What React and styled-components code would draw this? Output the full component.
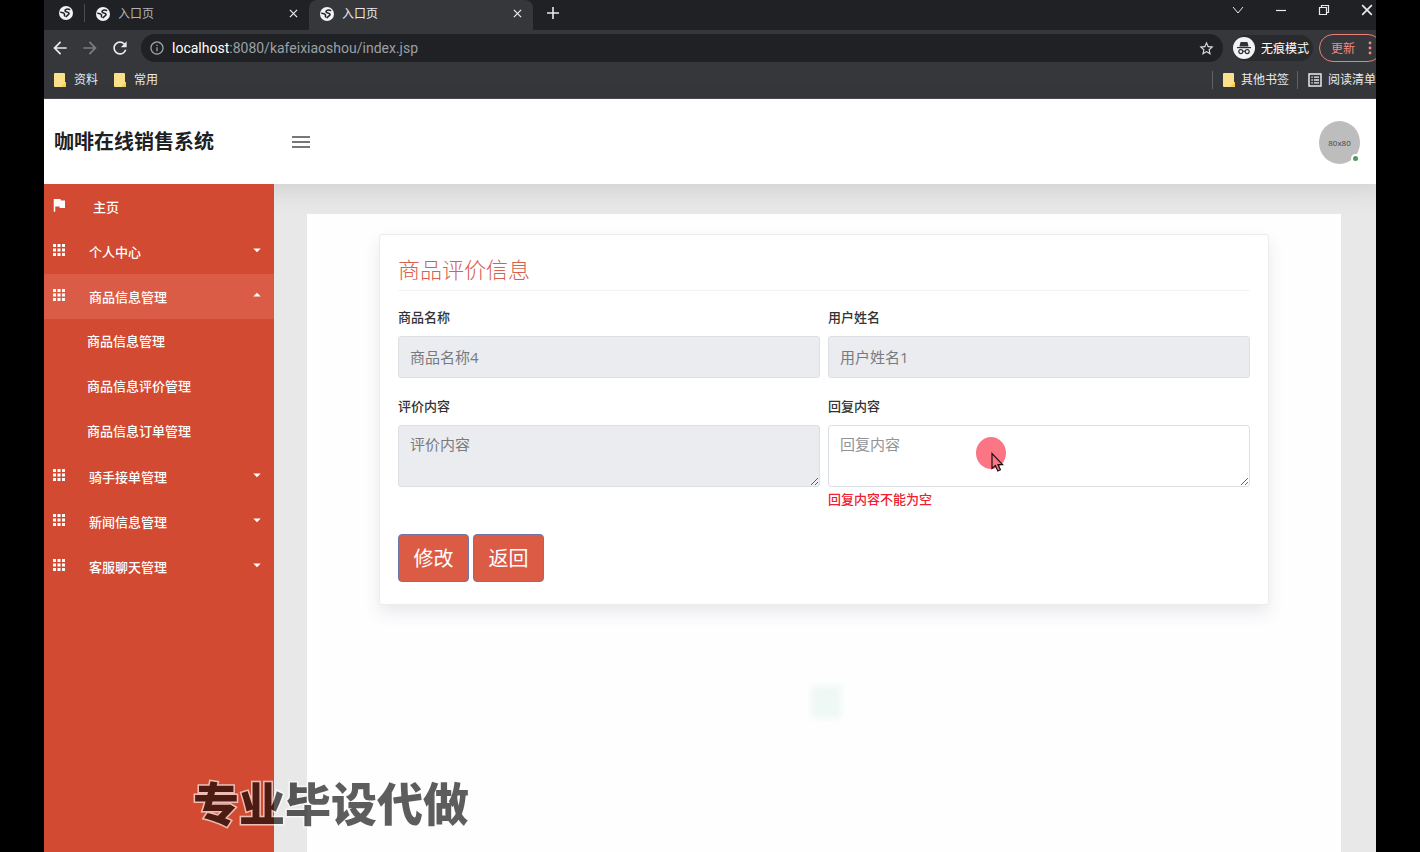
import React, { useState } from 'react';
import styled, { createGlobalStyle } from 'styled-components';
import {
  MdApps,
  MdArrowBack,
  MdArrowDropDown,
  MdArrowDropUp,
  MdArrowForward,
  MdFlag,
  MdInfoOutline,
  MdMenu,
  MdRefresh,
  MdStarBorder,
} from 'react-icons/md';

const menu = [
  { label: '主页', icon: 'flag' },
  { label: '个人中心' },
  {
    label: '商品信息管理',
    open: true,
    children: ['商品信息管理', '商品信息评价管理', '商品信息订单管理'],
  },
  { label: '骑手接单管理' },
  { label: '新闻信息管理' },
  { label: '客服聊天管理' },
];

const Globe = () => (
  <svg width="14" height="14" viewBox="0 0 14 14" aria-hidden="true">
    <circle cx="7" cy="7" r="7" fill="#f1f3f4" />
    <path
      d="M10.6 3.4C8.4 2.6 5.8 3.2 6 4.8c.2 1.400 3.600.8 4 2.400.3 1.600-2 1.800-2.800 3.400M1.800 6.200c1.600.2 3.200.6 3.600 1.600.3.800-.2 1.200.2 2"
      fill="none"
      stroke="#202124"
      strokeWidth="1.6"
      strokeLinecap="round"
    />
  </svg>
);

const Folder = () => (
  <svg width="12" height="14" viewBox="0 0 12 14" aria-hidden="true">
    <path d="M1 0h9a1 1 0 0 1 1 1v8h1v5H1a1 1 0 0 1-1-1V1a1 1 0 0 1 1-1z" fill="#fbe08a" />
    <path d="M11 9h1v5H8c0-2 1-3 3-3z" fill="#f6cf45" />
  </svg>
);

const Cross = ({ size }) => (
  <svg width={size} height={size} viewBox="0 0 10 10" aria-hidden="true">
    <path d="M1 1l8 8M9 1l-8 8" stroke="currentColor" strokeWidth="1.4" fill="none" />
  </svg>
);

const Incognito = () => (
  <svg width="22" height="22" viewBox="0 0 22 22" aria-hidden="true">
    <circle cx="11" cy="11" r="11" fill="#f1f3f4" />
    <path d="M7.6 5h6.8l1.2 4.4H6.4z" fill="#303134" />
    <path d="M4 10.6h14" stroke="#303134" strokeWidth="1.2" />
    <g fill="none" stroke="#303134" strokeWidth="1.2">
      <circle cx="7.8" cy="14.6" r="2" />
      <circle cx="14.2" cy="14.6" r="2" />
      <path d="M9.8 14.4q1.2-.8 2.4 0" />
    </g>
  </svg>
);

const ReadingList = () => (
  <svg width="14" height="14" viewBox="0 0 14 14" aria-hidden="true">
    <rect x="1" y="1" width="12" height="12" fill="none" stroke="#e8eaed" strokeWidth="1.5" />
    <path
      d="M3.4 4.2h1.4M6 4.2h5M3.4 7h1.4M6 7h5M3.4 9.8h1.4M6 9.8h5"
      stroke="#e8eaed"
      strokeWidth="1.3"
    />
  </svg>
);

const App = () => {
  const [reply, setReply] = useState('');

  return (
    <Screen>
      <GlobalStyle />
      <Window>
        <Chrome>
          <TabStrip>
            <PinnedTab type="button" aria-label="固定标签页">
              <Globe />
            </PinnedTab>
            <Tab>
              <Globe />
              <TabTitle>入口页</TabTitle>
              <TabClose type="button" aria-label="关闭">
                <Cross size={9} />
              </TabClose>
            </Tab>
            <Tab $active>
              <Globe />
              <TabTitle>入口页</TabTitle>
              <TabClose type="button" aria-label="关闭">
                <Cross size={9} />
              </TabClose>
            </Tab>
            <NewTab type="button" aria-label="新标签页">
              <svg width="12" height="12" viewBox="0 0 12 12">
                <path d="M6 0v12M0 6h12" stroke="currentColor" strokeWidth="1.6" />
              </svg>
            </NewTab>
            <WindowButtons>
              <WindowButton type="button" aria-label="搜索标签页">
                <svg width="12" height="12" viewBox="0 0 12 12">
                  <path d="M1 3l5 6 5-6" stroke="currentColor" fill="none" />
                </svg>
              </WindowButton>
              <WindowButton type="button" aria-label="最小化">
                <svg width="12" height="12" viewBox="0 0 12 12">
                  <path d="M1 6.5h10" stroke="currentColor" strokeWidth="1.2" />
                </svg>
              </WindowButton>
              <WindowButton type="button" aria-label="还原">
                <svg width="12" height="12" viewBox="0 0 12 12">
                  <path
                    d="M1.5 3.5h7v7h-7zM3.5 3.5v-2h7v7h-2"
                    stroke="currentColor"
                    strokeWidth="1.2"
                    fill="none"
                  />
                </svg>
              </WindowButton>
              <WindowButton type="button" aria-label="关闭窗口">
                <Cross size={12} />
              </WindowButton>
            </WindowButtons>
          </TabStrip>

          <Toolbar>
            <NavButton type="button" aria-label="后退">
              <MdArrowBack />
            </NavButton>
            <NavButton type="button" aria-label="前进" disabled>
              <MdArrowForward />
            </NavButton>
            <NavButton type="button" aria-label="刷新">
              <MdRefresh />
            </NavButton>
            <AddressBar>
              <MdInfoOutline size={16} />
              <Url>
                <b>localhost</b>:8080/kafeixiaoshou/index.jsp
              </Url>
              <MdStarBorder size={17} color="#dadce0" />
            </AddressBar>
            <Badge>
              <Incognito />
              无痕模式
            </Badge>
            <UpdateButton type="button">
              更新
              <svg width="4" height="14" viewBox="0 0 4 14" aria-hidden="true">
                <circle cx="2" cy="2" r="1.4" fill="currentColor" />
                <circle cx="2" cy="7" r="1.4" fill="currentColor" />
                <circle cx="2" cy="12" r="1.4" fill="currentColor" />
              </svg>
            </UpdateButton>
          </Toolbar>

          <Bookmarks>
            <Bookmark href="#">
              <Folder />
              资料
            </Bookmark>
            <Bookmark href="#">
              <Folder />
              常用
            </Bookmark>
            <BookmarksEnd>
              <Bookmark href="#">
                <Folder />
                其他书签
              </Bookmark>
              <Bookmark href="#">
                <ReadingList />
                阅读清单
              </Bookmark>
            </BookmarksEnd>
          </Bookmarks>
        </Chrome>

        <Header>
          <Brand>咖啡在线销售系统</Brand>
          <MenuToggle type="button" aria-label="菜单">
            <MdMenu size={24} />
          </MenuToggle>
          <Avatar>
            80x80
            <Online />
          </Avatar>
        </Header>

        <Body>
          <Sidebar>
            {menu.map((item) => (
              <React.Fragment key={item.label}>
                <MenuItem href="#" $active={item.open}>
                  {item.icon === 'flag' ? <MdFlag size={18} /> : <MdApps size={18} />}
                  <MenuLabel $home={item.icon === 'flag'}>{item.label}</MenuLabel>
                  {item.icon !== 'flag' &&
                    (item.open ? <MdArrowDropUp size={18} /> : <MdArrowDropDown size={18} />)}
                </MenuItem>
                {item.children &&
                  item.children.map((child) => (
                    <SubItem href="#" key={child}>
                      {child}
                    </SubItem>
                  ))}
              </React.Fragment>
            ))}
          </Sidebar>

          <Main>
            <Panel>
              <Card>
                <CardTitle>商品评价信息</CardTitle>
                <Fields>
                  <Field>
                    <Label htmlFor="goods">商品名称</Label>
                    <Input id="goods" placeholder="商品名称4" readOnly />
                  </Field>
                  <Field>
                    <Label htmlFor="user">用户姓名</Label>
                    <Input id="user" placeholder="用户姓名1" readOnly />
                  </Field>
                  <Field>
                    <Label htmlFor="comment">评价内容</Label>
                    <TextArea id="comment" placeholder="评价内容" readOnly />
                  </Field>
                  <Field>
                    <Label htmlFor="reply">回复内容</Label>
                    <TextArea
                      id="reply"
                      placeholder="回复内容"
                      value={reply}
                      onChange={(e) => setReply(e.target.value)}
                    />
                    {!reply && <ErrorText>回复内容不能为空</ErrorText>}
                    <Pointer width="32" height="36" viewBox="0 0 32 36" aria-hidden="true">
                      <ellipse cx="15" cy="16" rx="15" ry="16" fill="#fc7585" />
                      <path
                        d="M16 16.500v15l3.400-3 2.400 5.500 2.600-1.200-2.400-5.200h4.600z"
                        fill="#fc7585"
                        stroke="#1d1013"
                        strokeWidth="1.200"
                      />
                    </Pointer>
                  </Field>
                </Fields>
                <Actions>
                  <Button type="submit">修改</Button>
                  <Button type="button">返回</Button>
                </Actions>
              </Card>
              <Glow />
            </Panel>
          </Main>
        </Body>
      </Window>
      <Watermark>专业毕设代做</Watermark>
    </Screen>
  );
};

export default App;

const GlobalStyle = createGlobalStyle`
  * {
    box-sizing: border-box;
  }
  body {
    margin: 0;
    background: #000;
    font-family: 'Open Sans', 'Noto Sans CJK SC', sans-serif;
  }
  button, input, textarea {
    font-family: inherit;
  }
  svg {
    flex: none;
  }
`;

const Screen = styled.div`
  position: relative;
  height: 100vh;
  padding: 0 44px;
  overflow: hidden;
`;

const Window = styled.div`
  display: flex;
  flex-direction: column;
  height: 100%;
  background: #fff;
  overflow: hidden;
`;

/* browser frame, runs a little past the right edge */
const Chrome = styled.div`
  flex: none;
  margin-right: -12px;
  background: #36373b;
  color: #e8eaed;
  font-size: 12px;
`;

const TabStrip = styled.div`
  display: flex;
  align-items: center;
  height: 30px;
  background: #202124;
`;

const IconButton = styled.button`
  display: flex;
  align-items: center;
  justify-content: center;
  padding: 0;
  border: 0;
  background: none;
  color: #e8eaed;
`;

const PinnedTab = styled(IconButton)`
  width: 41px;
  height: 18px;
  margin-bottom: 4px;
  padding-left: 4px;
  border-right: 1px solid #4a4c50;
`;

const Tab = styled.div`
  display: flex;
  align-items: center;
  gap: 8px;
  width: 224px;
  height: 30px;
  padding: 0 11px 3px;
  border-radius: 8px 8px 0 0;
  background: ${(props) => (props.$active ? '#36373b' : 'transparent')};
  color: ${(props) => (props.$active ? '#e8eaed' : '#b0b3b8')};
`;

const TabTitle = styled.span`
  flex: 1;
  line-height: 18px;
`;

const TabClose = styled(IconButton)`
  width: 10px;
  height: 16px;
`;

const NewTab = styled(IconButton)`
  width: 40px;
  height: 26px;
  margin-bottom: 4px;
`;

const WindowButtons = styled.div`
  display: flex;
  height: 20px;
  margin-left: auto;
  margin-bottom: 10px;
`;

const WindowButton = styled(IconButton)`
  width: 43px;
`;

const Toolbar = styled.div`
  display: flex;
  align-items: center;
  height: 36px;
  padding: 0 6px;
`;

const NavButton = styled(IconButton)`
  width: 20px;
  margin-right: 10px;
  font-size: 20px;

  &:disabled {
    color: #7c7e82;
  }
`;

const AddressBar = styled.div`
  display: flex;
  flex: 1;
  align-items: center;
  gap: 7px;
  height: 28px;
  margin-left: 1px;
  padding: 0 8px;
  border-radius: 14px;
  background: #202124;
  color: #9aa0a6;
`;

const Url = styled.span`
  flex: 1;
  font-family: Roboto, sans-serif;
  font-size: 14px;
  line-height: 20px;

  b {
    color: #fff;
    font-weight: 400;
  }
`;

const Badge = styled.div`
  display: flex;
  align-items: center;
  gap: 6px;
  height: 26px;
  margin: 0 6px 0 10px;
  padding-right: 4px;
  border-radius: 13px;
  background: #292a2d;
  color: #fff;
`;

const UpdateButton = styled.button`
  display: flex;
  align-items: center;
  gap: 13px;
  width: 63px;
  height: 28px;
  padding: 0 0 0 11px;
  border: 1px solid #ee8078;
  border-radius: 14px;
  background: #36373b;
  color: #f28b82;
  font-size: 12px;
`;

const Bookmarks = styled.div`
  display: flex;
  align-items: center;
  height: 33px;
  gap: 16px;
  padding: 0 12px 4px 10px;
  border-bottom: 1px solid #4a4b4f;
`;

const Bookmark = styled.a`
  display: flex;
  align-items: center;
  gap: 8px;
  color: #e8eaed;
  line-height: 18px;
  text-decoration: none;
`;

const BookmarksEnd = styled.div`
  display: flex;
  margin-left: auto;

  ${Bookmark} {
    gap: 6px;
    padding: 0 8px 0 10px;
    border-left: 1px solid #5f6368;
  }

  ${Bookmark}:last-child {
    padding-right: 0;
  }
`;

const Header = styled.header`
  position: relative;
  display: flex;
  flex: none;
  align-items: center;
  height: 85px;
  padding: 1px 16px 0 10px;
  background: #fff;
  box-shadow: 0 2px 20px rgba(0, 0, 0, 0.06);
`;

const Brand = styled.h1`
  width: 235px;
  margin: 0;
  color: #1f2024;
  font-size: 20px;
  line-height: 28px;
  font-weight: 700;
`;

const MenuToggle = styled(IconButton)`
  color: #777;
`;

const Avatar = styled.div`
  position: relative;
  display: flex;
  align-items: center;
  justify-content: center;
  width: 41px;
  height: 43px;
  margin-left: auto;
  border-radius: 50%;
  background: #bdbdbd;
  color: #444;
  font-size: 8px;
`;

const Online = styled.span`
  position: absolute;
  right: 0;
  bottom: 1px;
  width: 9px;
  height: 9px;
  border: 2px solid #fff;
  border-radius: 50%;
  background: #4f9a5b;
`;

const Body = styled.div`
  display: flex;
  flex: 1;
  min-height: 0;
`;

const Sidebar = styled.nav`
  position: relative;
  width: 230px;
  background: #d14a31;
`;

const MenuItem = styled.a`
  display: flex;
  align-items: center;
  height: 45px;
  padding: 0 8px 1px 6px;
  background: ${(props) => (props.$active ? '#da5c47' : 'transparent')};
  color: #fff;
  font-size: 13px;
  font-weight: 500;
  text-decoration: none;

  svg {
    margin-bottom: 2px;
  }
`;

const MenuLabel = styled.span`
  flex: 1;
  margin-left: ${(props) => (props.$home ? '25px' : '21px')};
`;

const SubItem = styled.a`
  display: flex;
  align-items: center;
  height: 45px;
  padding: 0 0 3px 43px;
  color: #fff;
  font-size: 13px;
  font-weight: 500;
  text-decoration: none;
`;

const Main = styled.main`
  display: flex;
  flex: 1;
  padding: 30px 35px 0 33px;
  background: linear-gradient(#e0dfdf, #e8e8e8 30px);
`;

const Panel = styled.div`
  position: relative;
  flex: 1;
  padding: 20px 72px;
  background: #fefefe;
`;

const Card = styled.form`
  padding: 18px 18px 22px;
  border: 1px solid #ececef;
  border-radius: 3px;
  background: #fff;
  box-shadow: 0 8px 16px rgba(60, 60, 100, 0.11);
`;

const CardTitle = styled.h2`
  margin: 0 0 16px;
  padding-bottom: 5px;
  border-bottom: 1px solid #f3f3f3;
  color: #d8604f;
  font-size: 22px;
  line-height: 32px;
  font-weight: 300;
`;

const Fields = styled.div`
  display: grid;
  grid-template-columns: 1fr 1fr;
  gap: 18px 8px;
`;

const Field = styled.div`
  position: relative;
  display: flex;
  flex-direction: column;
`;

const Label = styled.label`
  margin-bottom: 9px;
  color: #333;
  font-size: 13px;
  line-height: 20px;
  font-weight: 500;
`;

const Input = styled.input`
  width: 100%;
  height: 42px;
  padding: 0 11px;
  border: 1px solid #dcdfe4;
  border-radius: 3px;
  background: ${(props) => (props.readOnly ? '#ebecf0' : '#fff')};
  color: #495057;
  font-size: 15px;
  outline: none;

  &::placeholder {
    color: ${(props) => (props.readOnly ? '#777a7f' : '#929497')};
  }
`;

const TextArea = styled(Input).attrs({ as: 'textarea' })`
  height: 62px;
  padding: 7px 11px;
  line-height: 22px;
  resize: vertical;
`;

const ErrorText = styled.span`
  margin-top: 2px;
  color: #f0202f;
  font-size: 13px;
  line-height: 20px;
  font-weight: 500;
`;

/* click highlight with the mouse arrow */
const Pointer = styled.svg`
  position: absolute;
  top: 41px;
  left: 35%;
  pointer-events: none;
`;

const Actions = styled.div`
  display: flex;
  gap: 4px;
  margin-top: 25px;
`;

const Button = styled.button`
  height: 48px;
  padding: 0 14px 2px;
  border: 1px solid #6d78a8;
  border-radius: 4px;
  min-width: 71px;
  background: #dc5b45;
  color: #fff;
  font-size: 20px;
`;

const Glow = styled.div`
  position: absolute;
  top: 472px;
  left: calc(50% - 13px);
  width: 30px;
  height: 32px;
  background: #eef8f5;
  filter: blur(3px);
`;

const Watermark = styled.div`
  position: absolute;
  left: 193px;
  bottom: 17px;
  color: #000;
  font-family: 'Noto Sans CJK SC', sans-serif;
  font-size: 46px;
  line-height: 68px;
  font-weight: 900;
  -webkit-text-stroke: 3px #fff;
  paint-order: stroke fill;
  opacity: 0.63;
  pointer-events: none;
`;
